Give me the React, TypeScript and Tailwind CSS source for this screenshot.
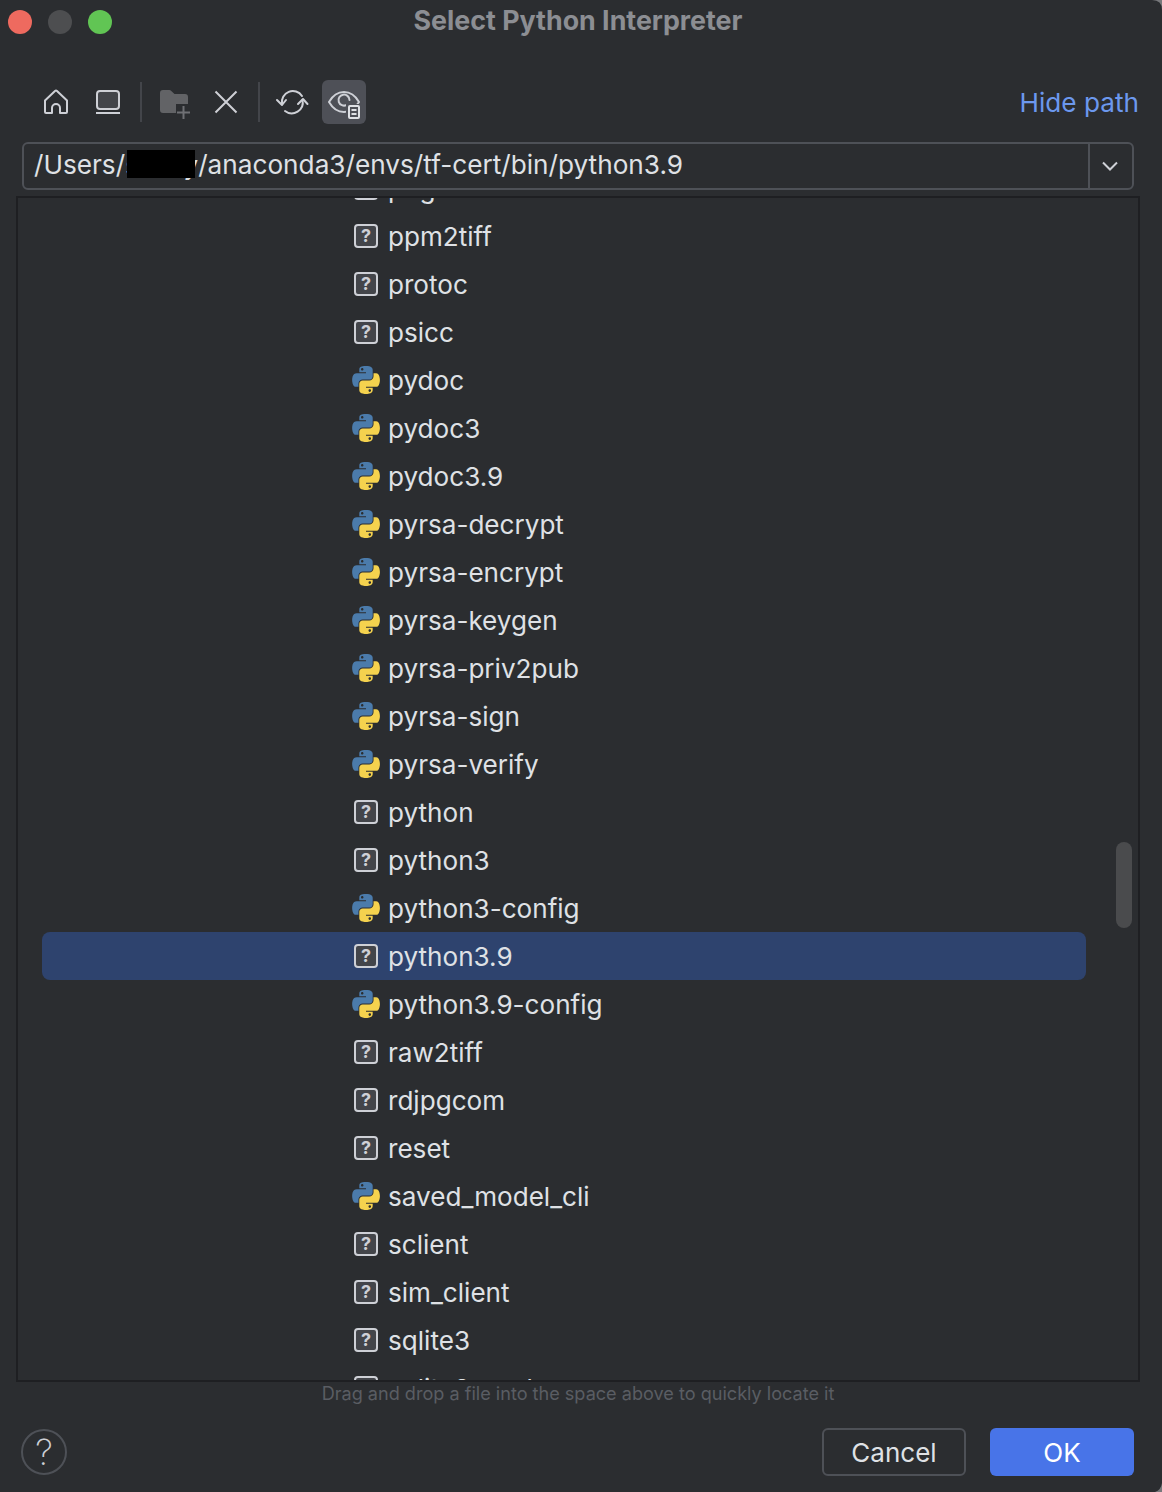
import React from "react";

const Python = () => (
  <svg width="28" height="28" viewBox="0 0 111 112" aria-hidden>
    <path fill="#4b7bab" fillRule="evenodd" d="M54.919,0.001 C50.335,0.022 45.958,0.413 42.106,1.095 C30.760,3.099 28.700,7.295 28.700,15.032 L28.700,25.250 L55.513,25.250 L55.513,28.656 L18.638,28.656 C10.845,28.656 4.022,33.340 1.888,42.250 C-0.574,52.463 -0.683,58.836 1.888,69.500 C3.793,77.438 8.344,83.094 16.138,83.094 L25.356,83.094 L25.356,70.844 C25.356,61.994 33.014,54.188 42.106,54.188 L68.888,54.188 C76.342,54.188 82.294,48.050 82.294,40.563 L82.294,15.032 C82.294,7.766 76.164,2.308 68.888,1.095 C64.282,0.328 59.503,-0.020 54.919,0.001 Z M40.419,8.220 C43.189,8.220 45.450,10.518 45.450,13.345 C45.450,16.161 43.189,18.438 40.419,18.438 C37.639,18.438 35.388,16.161 35.388,13.345 C35.388,10.518 37.639,8.220 40.419,8.220 Z" />
    <path fill="#f5d24e" fillRule="evenodd" d="M85.638,28.657 L85.638,40.563 C85.638,49.794 77.812,57.563 68.888,57.563 L42.106,57.563 C34.771,57.563 28.700,63.841 28.700,71.188 L28.700,96.719 C28.700,103.985 35.019,108.259 42.106,110.344 C50.593,112.840 58.731,113.291 68.888,110.344 C75.638,108.389 82.294,104.456 82.294,96.719 L82.294,86.500 L55.513,86.500 L55.513,83.094 L95.700,83.094 C103.493,83.094 106.397,77.658 109.106,69.500 C111.905,61.102 111.786,53.025 109.106,42.250 C107.181,34.493 103.503,28.657 95.700,28.657 L85.638,28.657 Z M70.575,93.313 C73.355,93.313 75.606,95.591 75.606,98.407 C75.606,101.234 73.355,103.532 70.575,103.532 C67.805,103.532 65.544,101.234 65.544,98.407 C65.544,95.591 67.805,93.313 70.575,93.313 Z" />
  </svg>
);

const Unknown = () => (
  <div className="w-[24px] h-[24px] box-border rounded-[4px] border-2 border-[#ced0d6] bg-[#43454a] flex items-center justify-center text-[#ced0d6] text-[18px] leading-none font-bold">
    ?
  </div>
);

type Row = [string, "u" | "p"];
const rows: Row[] = [
  ["pngfix", "u"],
  ["ppm2tiff", "u"],
  ["protoc", "u"],
  ["psicc", "u"],
  ["pydoc", "p"],
  ["pydoc3", "p"],
  ["pydoc3.9", "p"],
  ["pyrsa-decrypt", "p"],
  ["pyrsa-encrypt", "p"],
  ["pyrsa-keygen", "p"],
  ["pyrsa-priv2pub", "p"],
  ["pyrsa-sign", "p"],
  ["pyrsa-verify", "p"],
  ["python", "u"],
  ["python3", "u"],
  ["python3-config", "p"],
  ["python3.9", "u"],
  ["python3.9-config", "p"],
  ["raw2tiff", "u"],
  ["rdjpgcom", "u"],
  ["reset", "u"],
  ["saved_model_cli", "p"],
  ["sclient", "u"],
  ["sim_client", "u"],
  ["sqlite3", "u"],
  ["sqlite3_analyzer", "u"],
];

const ToolSep = () => <div className="w-[2px] h-[40px] bg-[#43454a] mx-[10px]" />;

const stroke = { fill: "none", stroke: "#ced0d6", strokeWidth: 2, strokeLinecap: "round" as const, strokeLinejoin: "round" as const };

const ToolIcon = ({ children, active }: { children: React.ReactNode; active?: boolean }) => (
  <div className={active ? "w-[44px] h-[44px] rounded-[6px] bg-[#4e5057]" : "w-[44px] h-[44px]"}>
    <svg width="44" height="44" viewBox="0 0 44 44" aria-hidden>
      {children}
    </svg>
  </div>
);

export default function App() {
  return (
    <div
      className="relative w-[1162px] h-[1492px] overflow-hidden bg-[#2b2d30] text-[#dfe1e5]"
      style={{ fontFamily: '"Inter", "Liberation Sans", sans-serif' }}
    >
      {/* window corners */}
      <svg className="absolute right-0 top-0" width="12" height="12" viewBox="0 0 12 12" aria-hidden>
        <path fill="#77787b" d="M2 0Q12 0 12 10V0z" />
      </svg>
      <svg className="absolute right-0 bottom-0" width="12" height="12" viewBox="0 0 12 12" aria-hidden>
        <path fill="#77787b" d="M12 3Q11 10 5 12H12z" />
      </svg>

      {/* title bar */}
      <div className="relative h-[44px] flex items-center pl-[8px]">
        <div className="flex gap-[16px]">
          <div className="w-[24px] h-[24px] rounded-full bg-[#ee6a5f]" />
          <div className="w-[24px] h-[24px] rounded-full bg-[#4d4e50]" />
          <div className="w-[24px] h-[24px] rounded-full bg-[#61c554]" />
        </div>
        <div className="absolute left-0 right-[6px] top-[2px] text-center text-[26.8px] leading-[36px] font-bold text-[#8c8e93]">
          Select Python Interpreter
        </div>
      </div>

      {/* toolbar */}
      <div className="mt-[36px] h-[44px] pl-[34px] pr-[23px] flex items-center">
        <div className="flex items-center gap-[8px]">
          <ToolIcon>
            <path {...stroke} d="M11 20.5 21 11a1.5 1.5 0 0 1 2 0l10 9.5V32a1 1 0 0 1-1 1h-6v-5a4 4 0 0 0-8 0v5h-6a1 1 0 0 1-1-1z" />
          </ToolIcon>
          <ToolIcon>
            <rect x="11" y="11" width="22" height="18" rx="3" fill="#43454a" stroke="#ced0d6" strokeWidth="2" />
            <path {...stroke} strokeLinecap="butt" d="M10 33h24" />
          </ToolIcon>
        </div>
        <ToolSep />
        <div className="flex items-center gap-[8px]">
          <ToolIcon>
            <path fill="#626366" d="M8 13a3 3 0 0 1 3-3h6.5a2 2 0 0 1 1.5.7L22.5 14H33a3 3 0 0 1 3 3v13a3 3 0 0 1-3 3H11a3 3 0 0 1-3-3z" />
            <rect x="24" y="24" width="15" height="15" fill="#2b2d30" />
            <path fill="none" stroke="#6f7074" strokeWidth="2" d="M31.5 26v13M25 32.5h13" />
          </ToolIcon>
          <ToolIcon>
            <path {...stroke} strokeLinecap="butt" d="M11.5 11.5l21 21M32.5 11.5l-21 21" />
          </ToolIcon>
        </div>
        <ToolSep />
        <div className="flex items-center gap-[8px]">
          <ToolIcon>
            <path {...stroke} d="M12 24A11 11 0 0 1 32 16" />
            <path {...stroke} d="M7 20l5 5 4-5" />
            <path {...stroke} d="M32.5 20A11 11 0 0 1 15 31" />
            <path {...stroke} d="M28 24l5-5 4.5 5" />
          </ToolIcon>
          <ToolIcon active>
            <path {...stroke} d="M7 22C11 15 16 12 22 12s11 3 15 10c-4 7-9 10-15 10S11 29 7 22z" />
            <path {...stroke} d="M24.5 25a5.5 5.5 0 1 1 3-5" />
            <rect x="24" y="24" width="15" height="16" fill="#4e5057" />
            <rect x="27" y="26" width="10" height="12" rx="1" fill="#4e5057" stroke="#dfe1e5" strokeWidth="2" />
            <path fill="none" stroke="#dfe1e5" strokeWidth="2" d="M29.5 30h5M29.5 34h5" />
          </ToolIcon>
        </div>
        <div className="ml-auto pt-[2px] text-[26.2px] leading-[34px] text-[#6c98ee]">Hide path</div>
      </div>

      {/* path field */}
      <div className="mt-[18px] ml-[22px] w-[1112px] h-[48px] box-border border-2 border-[#4e5157] rounded-[6px] flex items-stretch">
        <div className="flex-1 pl-[10px] pb-[1px] flex items-center text-[26.2px] leading-none whitespace-nowrap text-[#dfe1e5]">
          <span>/Users/</span>
          <span className="relative inline-block w-[73px] h-[26px]">
            <span className="absolute left-0 top-0">s</span>
            <span className="absolute right-0 top-0">y</span>
            <span className="absolute left-[2px] w-[68px] top-[-3px] h-[28px] bg-black" />
          </span>
          <span>/anaconda3/envs/tf-cert/bin/python3.9</span>
        </div>
        <div className="w-[44px] pr-[2px] border-l-2 border-[#4e5157] flex items-center justify-center">
          <svg width="20" height="12" viewBox="0 0 20 12" aria-hidden>
            <path fill="none" stroke="#ced0d6" strokeWidth="2" d="M3 2.5l7 7 7-7" />
          </svg>
        </div>
      </div>

      {/* file tree */}
      <div className="relative mt-[6px] ml-[16px] w-[1124px] h-[1186px] box-border border-2 border-[#1e1f22] overflow-hidden">
        <div className="mt-[-34px]">
          {rows.map(([name, kind]) => {
            const sel = name === "python3.9";
            return (
              <div
                key={name}
                className={
                  sel
                    ? "ml-[24px] w-[1044px] h-[48px] pl-[310px] flex items-center rounded-[8px] bg-[#2e436e]"
                    : "ml-[24px] w-[1044px] h-[48px] pl-[310px] flex items-center"
                }
              >
                <div className="w-[28px] flex justify-center">{kind === "p" ? <Python /> : <Unknown />}</div>
                <span className="ml-[8px] pt-[2px] text-[26.1px] leading-[46px] text-[#dfe1e5]">{name}</span>
              </div>
            );
          })}
        </div>
        <div className="absolute left-[1098px] top-[644px] w-[16px] h-[86px] rounded-full bg-[#4a4b4d]" />
      </div>

      {/* hint */}
      <div className="h-[24px] pr-[6px] text-center text-[18.1px] leading-[22px] text-[#5a5d63]">
        Drag and drop a file into the space above to quickly locate it
      </div>

      {/* footer */}
      <div className="mt-[22px] pl-[21px] pr-[28px] flex items-center">
        <div className="w-[46px] h-[46px] box-border rounded-full border-2 border-[#4e5157] flex items-center justify-center text-[36px] font-extralight text-[#ced0d6]">
          ?
        </div>
        <div className="ml-auto flex gap-[24px]">
          <div className="w-[144px] h-[48px] pt-[1px] box-border rounded-[6px] border-2 border-[#4e5157] flex items-center justify-center text-[26px] text-[#dfe1e5]">
            Cancel
          </div>
          <div className="w-[144px] h-[48px] pt-[1px] box-border rounded-[6px] bg-[#4874e8] flex items-center justify-center text-[26px] text-white">
            OK
          </div>
        </div>
      </div>
    </div>
  );
}
